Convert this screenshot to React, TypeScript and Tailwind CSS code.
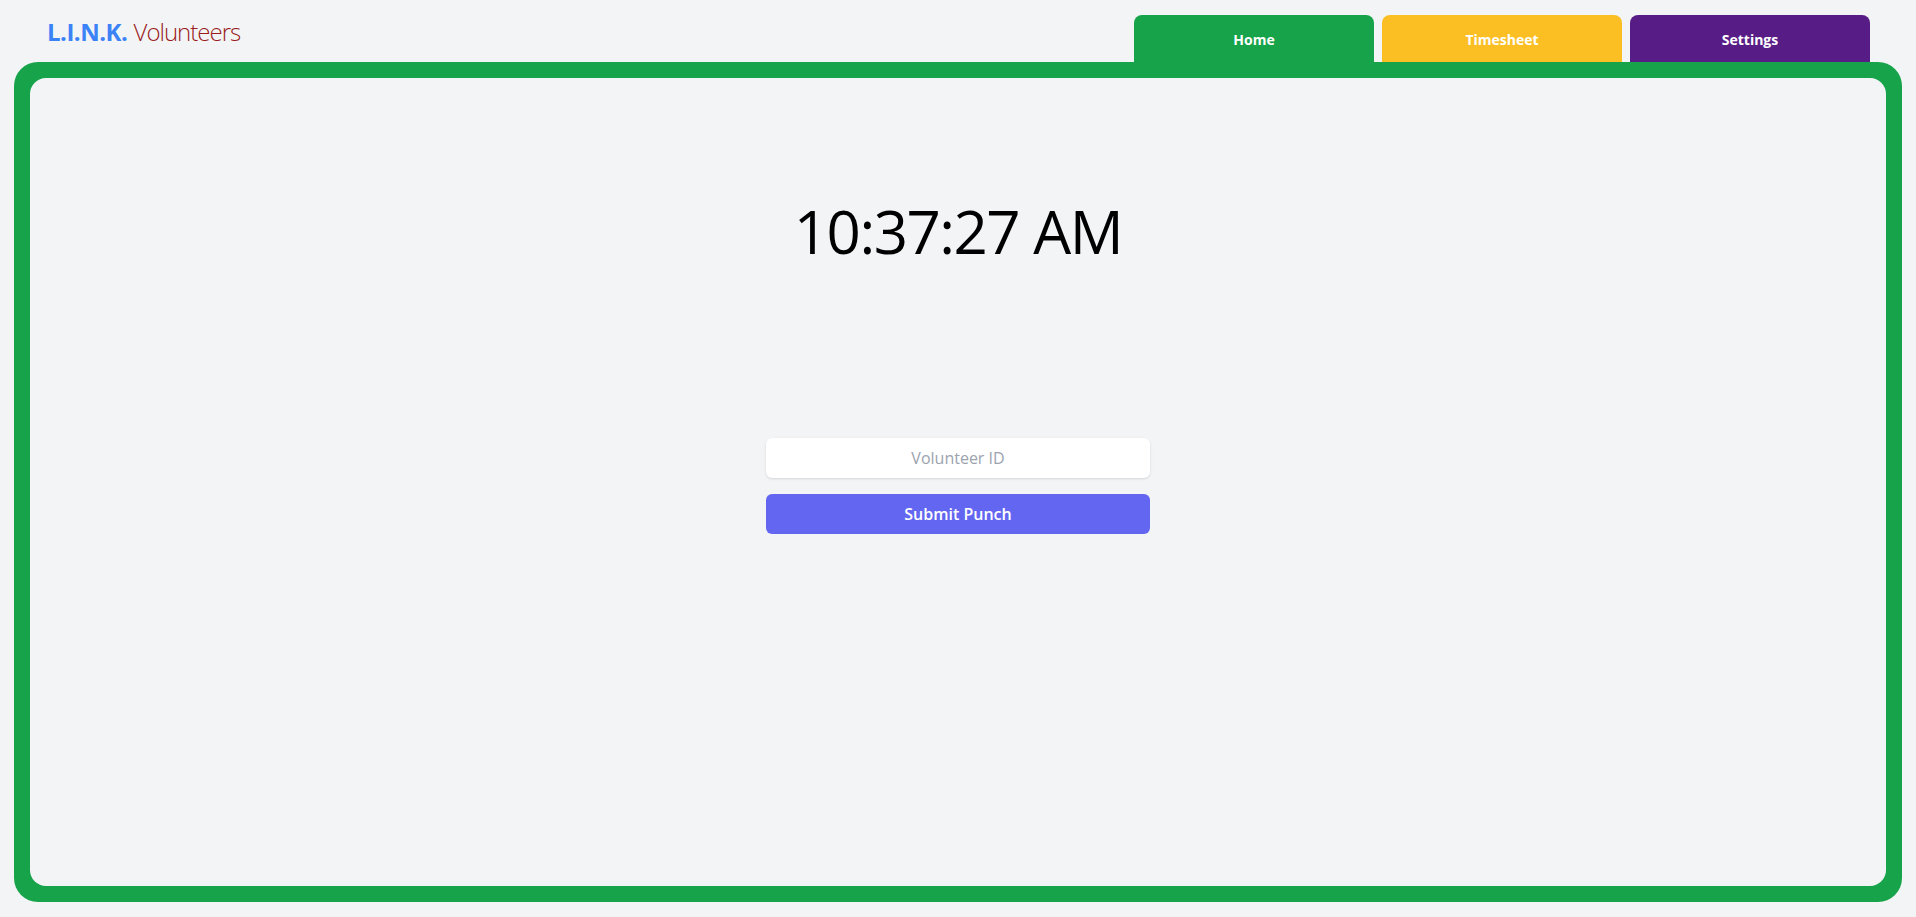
import { useState } from 'react';

const tabs = [
  { label: 'Home', color: 'bg-[#16a34a]' },
  { label: 'Timesheet', color: 'bg-[#fbbf24]' },
  { label: 'Settings', color: 'bg-[#581c87]' },
];

export default function App() {
  const [volunteerId, setVolunteerId] = useState('');

  return (
    <div
      className="flex h-screen flex-col bg-[#f3f4f6]"
      style={{ fontFamily: '"Open Sans", "Noto Sans", sans-serif' }}
    >
      <header className="flex h-[62px] shrink-0 items-start justify-between pl-[47px] pr-[46px] pt-[15px]">
        <h1 className="mt-px text-2xl leading-8">
          <span className="font-bold tracking-[-0.5px] text-[#3b82f6]">L.I.N.K.</span>{' '}
          <span className="font-light tracking-[-1px] text-[#991b1b]">Volunteers</span>
        </h1>
        <nav className="flex gap-2">
          {tabs.map((tab) => (
            <button
              key={tab.label}
              className={`flex h-[47px] w-[240px] items-center justify-center rounded-t-lg pt-[3px] text-sm font-bold text-white ${tab.color}`}
            >
              {tab.label}
            </button>
          ))}
        </nav>
      </header>

      <main className="mx-[14px] mb-[15px] flex-1 rounded-3xl bg-[#16a34a] p-4">
        <div className="flex h-full flex-col items-center rounded-2xl bg-[#f3f4f6] pt-[123px]">
          <div className="text-6xl leading-none tracking-[-1.5px] text-black">10:37:27 AM</div>

          <form
            className="mt-[177px] flex w-96 flex-col gap-4"
            onSubmit={(e) => e.preventDefault()}
          >
            <input
              type="text"
              value={volunteerId}
              onChange={(e) => setVolunteerId(e.target.value)}
              placeholder="Volunteer ID"
              className="h-10 rounded-md bg-white px-3 text-center text-base shadow-sm outline-none placeholder:text-[#9ca3af]"
            />
            <button
              type="submit"
              className="h-10 rounded-md bg-[#6366f1] text-base font-semibold text-white"
            >
              Submit Punch
            </button>
          </form>
        </div>
      </main>
    </div>
  );
}
